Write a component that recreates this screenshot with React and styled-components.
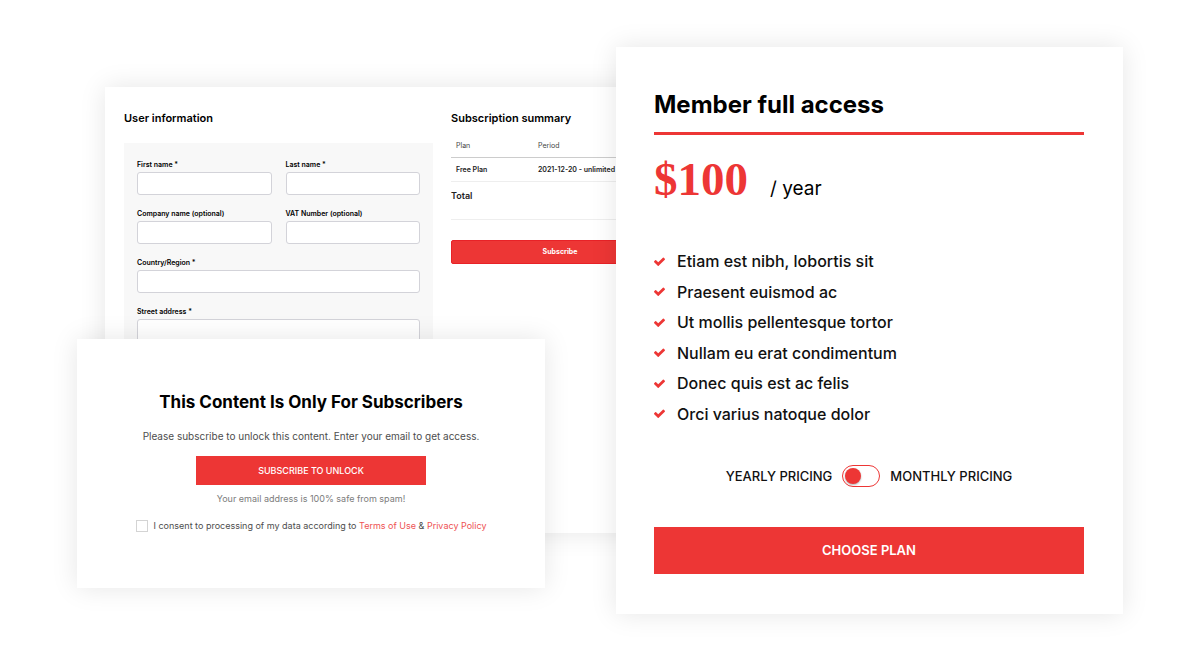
import React from "react";
import styled, { createGlobalStyle } from "styled-components";

const RED = "#ed3635";

const GlobalStyle = createGlobalStyle`
  *, *::before, *::after { box-sizing: border-box; }
  body {
    margin: 0;
    background: #fff;
    color: #000;
    font-family: Inter, "Open Sans", "Liberation Sans", sans-serif;
  }
  h2, p, ul { margin: 0; padding: 0; }
  button, input { font-family: inherit; }
`;

const Stage = styled.main`
  display: grid;
  grid-template-columns:
    minmax(0, 28fr) minmax(0, 440fr) minmax(0, 71fr)
    minmax(0, 72fr) minmax(0, 435fr);
  align-items: start;
  padding: 47px 77px 46px;
`;

const Card = styled.section`
  grid-row: 1;
  background: #fff;
  box-shadow: 0 0 25px rgba(0, 0, 0, 0.1);
`;

const CheckoutCard = styled(Card)`
  grid-column: 2 / 5;
  display: grid;
  grid-template-columns: minmax(0, 309fr) minmax(0, 218fr);
  column-gap: 18px;
  min-height: 446px;
  margin-top: 40px;
  padding: 24px 19px;
`;

const SubscribeCard = styled(Card)`
  grid-column: 1 / 3;
  display: flex;
  flex-direction: column;
  align-items: center;
  margin-top: 292px;
  padding: 52px 24px 55px;
`;

const PlanCard = styled(Card)`
  grid-column: 4 / 6;
  padding: 42px 39px 40px 38px;
`;

const Column = styled.div`
  display: flex;
  flex-direction: column;
`;

const SmallHeading = styled.h2`
  font-size: 11px;
  line-height: 14px;
  font-weight: 600;
  white-space: nowrap;
`;

const FieldPanel = styled.form`
  flex: 1;
  display: grid;
  grid-template-columns: 1fr 1fr;
  align-content: start;
  gap: 14px;
  margin-top: 18px;
  padding: 17px 13px;
  background: #f8f8f8;
`;

const Field = styled.label`
  grid-column: ${(p) => (p.$wide ? "1 / -1" : "auto")};
  display: flex;
  flex-direction: column;
  gap: 2px;
  font-size: 7px;
  line-height: 10px;
  font-weight: 600;
`;

const TextInput = styled.input`
  width: 100%;
  height: 23px;
  padding: 0 6px;
  border: 1px solid #d3d3d9;
  border-radius: 3px;
  background: #fff;
  font-size: 8px;
`;

const SummaryTable = styled.table`
  width: 100%;
  margin-top: 10px;
  border-collapse: collapse;
  font-size: 7px;
  line-height: 10px;
  text-align: left;
  white-space: nowrap;

  th, td { padding: 6px 5px; }
  th { font-weight: 400; color: #444; border-bottom: 1px solid #ccc; }
  td { font-weight: 600; color: #222; padding: 7px 5px 6px; border-bottom: 1px solid #eee; }
  th:first-child { width: 82px; }
`;

const Total = styled.p`
  padding: 7px 0 16px;
  border-bottom: 1px solid #eee;
  color: #222;
  font-size: 9px;
  line-height: 14px;
  font-weight: 600;
`;

const RedButton = styled.button`
  border: 0;
  padding: 0 0 2px;
  background: ${RED};
  color: #fff;
  cursor: pointer;
`;

const CheckoutButton = styled(RedButton)`
  height: 24px;
  margin-top: 20px;
  border: 1px solid #e82227;
  border-radius: 2px;
  font-size: 7px;
  font-weight: 700;
`;

const UnlockHeading = styled.h2`
  font-size: 17px;
  line-height: 22px;
  font-weight: 700;
`;

const Note = styled.p`
  margin-top: ${(p) => (p.$hint ? "7px" : "16px")};
  color: ${(p) => (p.$hint ? "#7c7c7c" : "#4d4d4d")};
  font-size: ${(p) => (p.$hint ? "9px" : "10px")};
  line-height: 14px;
`;

const UnlockButton = styled(RedButton)`
  width: 230px;
  max-width: 100%;
  height: 29px;
  margin-top: 13px;
  padding: 0;
  font-size: 9px;
  font-weight: 500;
`;

const Consent = styled.div`
  display: flex;
  align-items: center;
  gap: 6px;
  margin-top: 13px;
  color: #4d4d4d;
  font-size: 9px;
  line-height: 14px;
  white-space: nowrap;
`;

const ConsentBox = styled.input`
  appearance: none;
  width: 12px;
  height: 12px;
  margin: 0;
  border: 1px solid #d4d4d4;
  background: #fff;

  &:checked { background: ${RED}; }
`;

const TextLink = styled.a`
  color: #ee5253;
  text-decoration: none;
`;

const PlanTitle = styled.h2`
  padding-bottom: 11px;
  border-bottom: 3px solid ${RED};
  font-size: 24px;
  line-height: 32px;
  font-weight: 700;
`;

const Price = styled.p`
  display: flex;
  align-items: baseline;
  gap: 22px;
  padding-top: 18px;
  line-height: 52px;
`;

const Amount = styled.strong`
  color: ${RED};
  font-family: "Liberation Serif", serif;
  font-size: 47px;
  font-weight: 700;
`;

const Interval = styled.span`
  font-size: 19px;
`;

const Features = styled.ul`
  display: flex;
  flex-direction: column;
  justify-content: space-between;
  min-height: 173px;
  margin-top: 36px;
  list-style: none;
`;

const Feature = styled.li`
  display: flex;
  align-items: center;
  gap: 12px;
  color: #111;
  font-size: 16px;
  line-height: 20px;
  font-weight: 500;
`;

const CheckSvg = styled.svg`
  flex: none;
  width: 11px;
  height: 11px;
  fill: ${RED};
`;

const PricingSwitch = styled.div`
  display: flex;
  align-items: center;
  justify-content: center;
  gap: 10px;
  margin-top: 41px;
  color: #111;
  font-size: 13px;
  line-height: 22px;
  font-weight: 500;
`;

const Toggle = styled.input`
  appearance: none;
  display: flex;
  align-items: center;
  width: 38px;
  height: 22px;
  margin: 0;
  padding: 0 2px;
  border: 1px solid ${RED};
  border-radius: 11px;
  background: #fff;
  cursor: pointer;

  &::before {
    content: "";
    width: 16px;
    height: 16px;
    border-radius: 50%;
    background: ${RED};
    box-shadow: 0 1px 2px rgba(0, 0, 0, 0.3);
  }
  &:checked { justify-content: flex-end; }
`;

const ChooseButton = styled(RedButton)`
  display: block;
  width: 100%;
  height: 47px;
  margin-top: 40px;
  font-size: 13px;
  font-weight: 600;
`;

const fields = [
  { name: "firstName", label: "First name *" },
  { name: "lastName", label: "Last name *" },
  { name: "company", label: "Company name (optional)" },
  { name: "vat", label: "VAT Number (optional)" },
  { name: "country", label: "Country/Region *", wide: true },
  { name: "street", label: "Street address *", wide: true },
];

const features = [
  "Etiam est nibh, lobortis sit",
  "Praesent euismod ac",
  "Ut mollis pellentesque tortor",
  "Nullam eu erat condimentum",
  "Donec quis est ac felis",
  "Orci varius natoque dolor",
];

function Check() {
  return (
    <CheckSvg viewBox="121 121 1550 1550" aria-hidden="true">
      <path d="M1671 566q0 40-28 68l-724 724-136 136q-28 28-68 28t-68-28l-136-136-362-362q-28-28-28-68t28-68l136-136q28-28 68-28t68 28l294 295 656-657q28-28 68-28t68 28l136 136q28 28 28 68z" />
    </CheckSvg>
  );
}

export default function App() {
  return (
    <>
      <GlobalStyle />
      <Stage>
        <CheckoutCard>
          <Column>
            <SmallHeading>User information</SmallHeading>
            <FieldPanel>
              {fields.map((f) => (
                <Field key={f.name} $wide={f.wide}>
                  {f.label}
                  <TextInput type="text" name={f.name} />
                </Field>
              ))}
            </FieldPanel>
          </Column>
          <Column>
            <SmallHeading>Subscription summary</SmallHeading>
            <SummaryTable>
              <thead>
                <tr><th scope="col">Plan</th><th scope="col">Period</th></tr>
              </thead>
              <tbody>
                <tr><td>Free Plan</td><td>2021-12-20 - unlimited</td></tr>
              </tbody>
            </SummaryTable>
            <Total>Total</Total>
            <CheckoutButton type="button">Subscribe</CheckoutButton>
          </Column>
        </CheckoutCard>

        <SubscribeCard>
          <UnlockHeading>This Content Is Only For Subscribers</UnlockHeading>
          <Note>Please subscribe to unlock this content. Enter your email to get access.</Note>
          <UnlockButton type="button">SUBSCRIBE TO UNLOCK</UnlockButton>
          <Note $hint>Your email address is 100% safe from spam!</Note>
          <Consent>
            <ConsentBox type="checkbox" id="consent" />
            <label htmlFor="consent">
              I consent to processing of my data according to{" "}
              <TextLink href="#terms">Terms of Use</TextLink> &amp;{" "}
              <TextLink href="#privacy">Privacy Policy</TextLink>
            </label>
          </Consent>
        </SubscribeCard>

        <PlanCard>
          <PlanTitle>Member full access</PlanTitle>
          <Price>
            <Amount>$100</Amount>
            <Interval>/ year</Interval>
          </Price>
          <Features>
            {features.map((text) => (
              <Feature key={text}><Check />{text}</Feature>
            ))}
          </Features>
          <PricingSwitch>
            <label htmlFor="pricing">YEARLY PRICING</label>
            <Toggle type="checkbox" role="switch" id="pricing" />
            <label htmlFor="pricing">MONTHLY PRICING</label>
          </PricingSwitch>
          <ChooseButton type="button">CHOOSE PLAN</ChooseButton>
        </PlanCard>
      </Stage>
    </>
  );
}
